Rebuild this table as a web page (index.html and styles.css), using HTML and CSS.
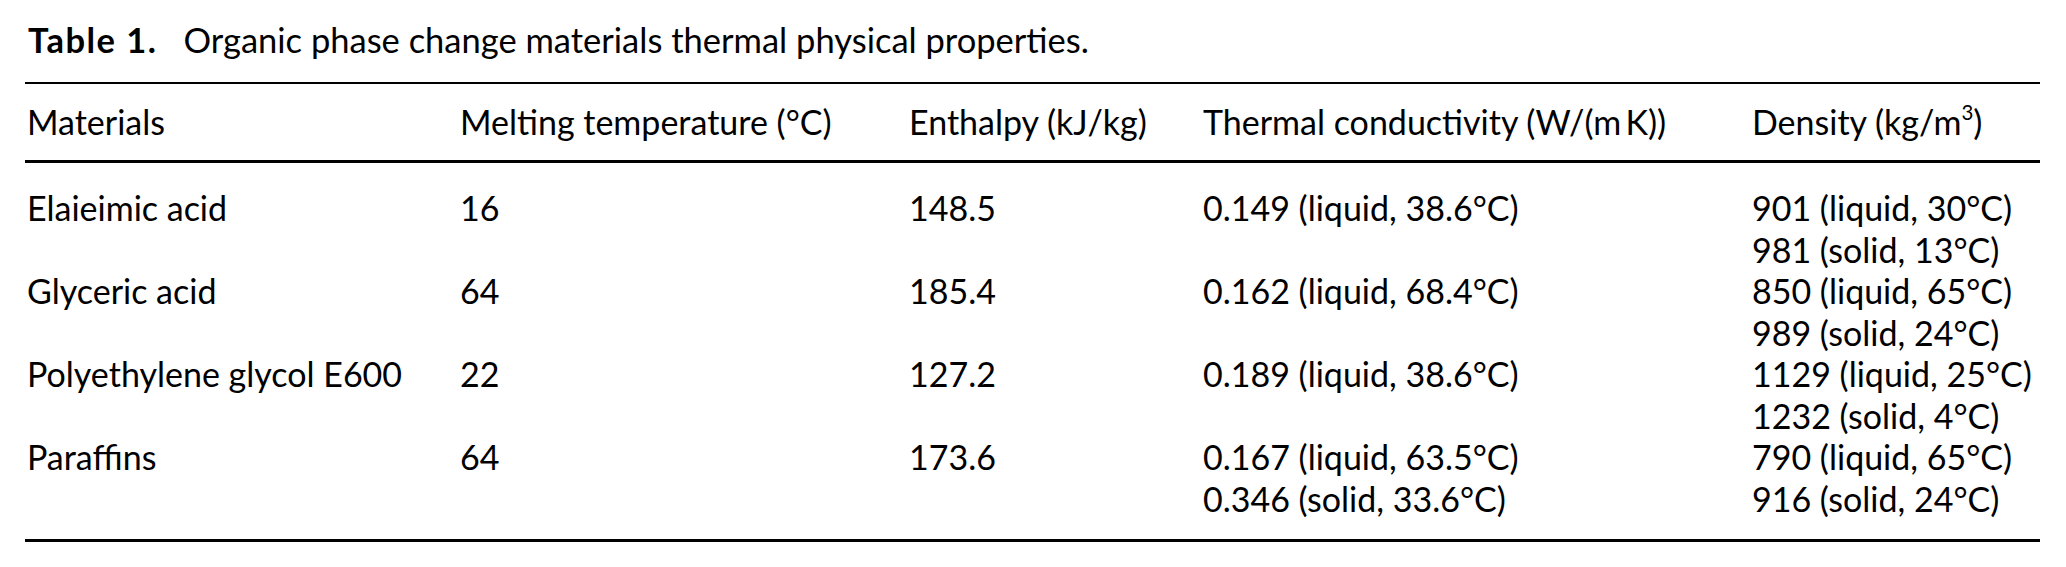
FILE: index.html
```html
<!DOCTYPE html>
<html lang="en">
<head>
<meta charset="utf-8">
<title>Table 1</title>
<link rel="stylesheet" href="styles.css">
</head>
<body>
<div class="page">
  <div class="caption"><span class="label">Table 1.</span><span class="caption-text">Organic phase change materials thermal physical properties.</span></div>
  <div class="table">
    <div class="row head">
      <div class="cell">Materials</div>
      <div class="cell">Melting temperature (°C)</div>
      <div class="cell">Enthalpy (kJ/kg)</div>
      <div class="cell">Thermal conductivity (W/(m&#8201;K))</div>
      <div class="cell">Density (kg/m<sup>3</sup>)</div>
    </div>
    <div class="body">
      <div class="row">
        <div class="cell">Elaieimic acid</div>
        <div class="cell">16</div>
        <div class="cell">148.5</div>
        <div class="cell">0.149 (liquid, 38.6°C)</div>
        <div class="cell"><div>901 (liquid, 30°C)</div><div>981 (solid, 13°C)</div></div>
      </div>
      <div class="row">
        <div class="cell">Glyceric acid</div>
        <div class="cell">64</div>
        <div class="cell">185.4</div>
        <div class="cell">0.162 (liquid, 68.4°C)</div>
        <div class="cell"><div>850 (liquid, 65°C)</div><div>989 (solid, 24°C)</div></div>
      </div>
      <div class="row">
        <div class="cell">Polyethylene glycol E600</div>
        <div class="cell">22</div>
        <div class="cell">127.2</div>
        <div class="cell">0.189 (liquid, 38.6°C)</div>
        <div class="cell"><div>1129 (liquid, 25°C)</div><div>1232 (solid, 4°C)</div></div>
      </div>
      <div class="row">
        <div class="cell">Paraffins</div>
        <div class="cell">64</div>
        <div class="cell">173.6</div>
        <div class="cell"><div>0.167 (liquid, 63.5°C)</div><div>0.346 (solid, 33.6°C)</div></div>
        <div class="cell"><div>790 (liquid, 65°C)</div><div>916 (solid, 24°C)</div></div>
      </div>
    </div>
  </div>
</div>
</body>
</html>
```

FILE: styles.css
```css
html, body {
  margin: 0;
  padding: 0;
  background: #ffffff;
}
body {
  font-family: "Lato", "Open Sans", sans-serif;
  color: #000000;
  width: 2066px;
  height: 567px;
  overflow: hidden;
}
.page {
  padding: 0 26px 0 25px;
}
.caption {
  font-size: 34.5px;
  line-height: 40px;
  padding: 20px 0 0 3px;
  height: 82px;
  box-sizing: border-box;
  white-space: nowrap;
}
.label {
  font-weight: 700;
  letter-spacing: 1.5px;
  margin-right: 26px;
}
.table {
  border-top: 2px solid #000;
  border-bottom: 3px solid #000;
  font-size: 34px;
}
.row {
  display: grid;
  grid-template-columns: 433px 449px 294px 549px 1fr;
  padding-left: 2px;
}
.head {
  height: 76px;
  align-items: center;
  border-bottom: 3px solid #000;
  line-height: 40px;
}
.body {
  padding: 24px 0 20px;
}
.body .row {
  line-height: 41.5px;
}
.cell {
  white-space: nowrap;
}
sup {
  font-size: 60%;
  line-height: 0;
  vertical-align: 0.75em;
}
```
